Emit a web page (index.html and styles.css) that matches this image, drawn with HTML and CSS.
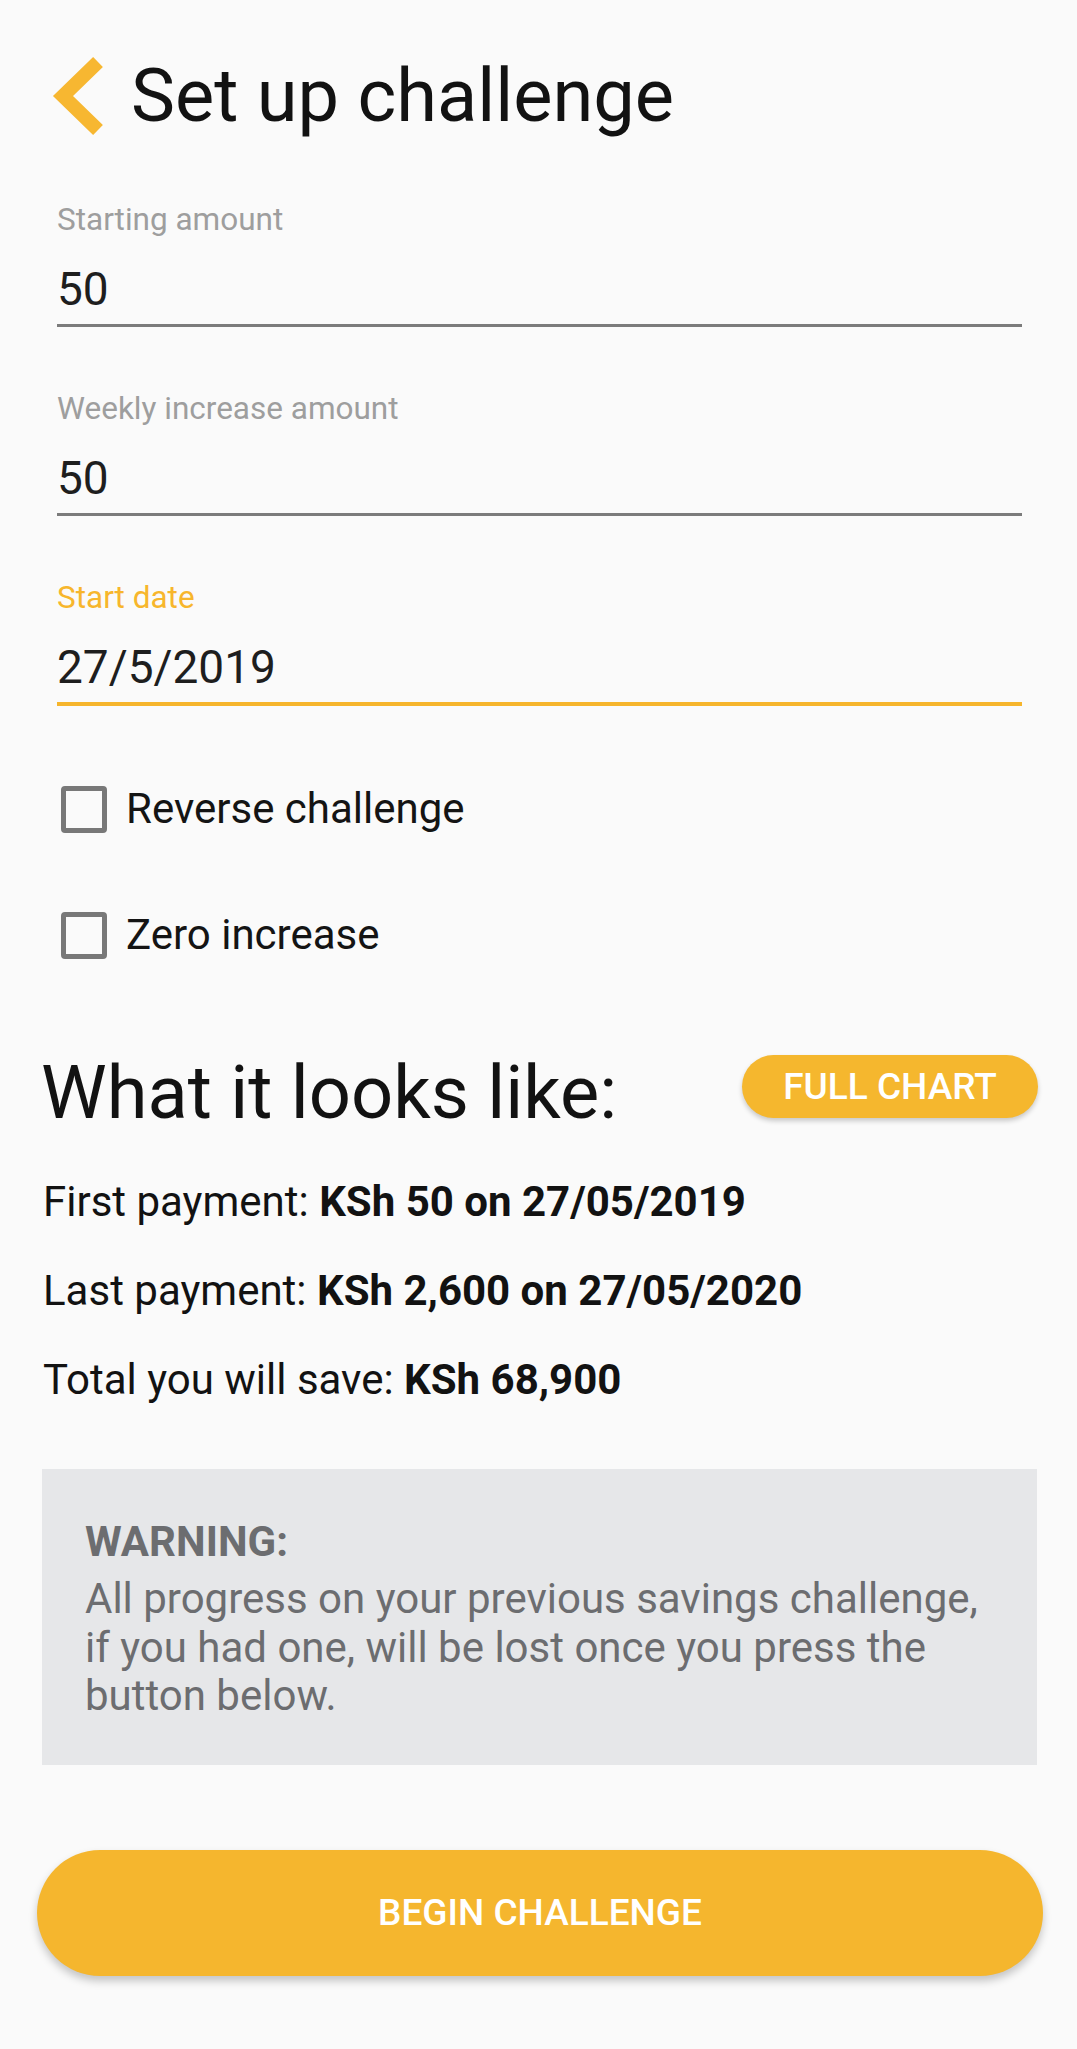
FILE: index.html
```html
<!DOCTYPE html>
<html lang="en">
<head>
<meta charset="utf-8">
<title>Set up challenge</title>
<link rel="stylesheet" href="styles.css">
</head>
<body>
<div class="screen">
  <header class="header">
    <svg class="back" width="60" height="90" viewBox="0 0 60 90" aria-hidden="true">
      <path d="M50 11 L15 45 L50 79" fill="none" stroke="#f7b731" stroke-width="14" stroke-linejoin="miter"/>
    </svg>
    <h1 class="title">Set up challenge</h1>
  </header>

  <section class="form">
    <div class="field field-first">
      <div class="label">Starting amount</div>
      <div class="value">50</div>
      <div class="line"></div>
    </div>
    <div class="field">
      <div class="label">Weekly increase amount</div>
      <div class="value">50</div>
      <div class="line"></div>
    </div>
    <div class="field field-focus">
      <div class="label">Start date</div>
      <div class="value">27/5/2019</div>
      <div class="line"></div>
    </div>

    <div class="check check-first">
      <span class="box"></span>
      <span class="check-text">Reverse challenge</span>
    </div>
    <div class="check">
      <span class="box"></span>
      <span class="check-text">Zero increase</span>
    </div>
  </section>

  <section class="summary">
    <div class="summary-head">
      <h2 class="heading">What it looks like:</h2>
      <button class="chip">FULL CHART</button>
    </div>
    <p class="stat stat-first">First payment: <b>KSh 50 on 27/05/2019</b></p>
    <p class="stat">Last payment: <b>KSh 2,600 on 27/05/2020</b></p>
    <p class="stat">Total you will save: <b>KSh 68,900</b></p>

    <div class="warning">
      <div class="warning-title">WARNING:</div>
      <div class="warning-text">All progress on your previous savings challenge, if you had one, will be lost once you press the button below.</div>
    </div>
  </section>

  <div class="actions">
    <button class="begin">BEGIN CHALLENGE</button>
  </div>
</div>
</body>
</html>
```

FILE: styles.css
```css
* { box-sizing: border-box; }

html, body {
  margin: 0;
  padding: 0;
  background: #fafafa;
}

body {
  font-family: Roboto, "Noto Sans", "Liberation Sans", sans-serif;
  color: #121212;
}

.screen {
  width: 1077px;
  min-height: 2049px;
  display: flex;
  flex-direction: column;
}

/* Header */
.header {
  display: flex;
  align-items: center;
  margin-top: 52px;
  height: 88px;
  padding-left: 48px;
}

.back {
  display: block;
  flex: none;
  margin-right: 23px;
}

.title {
  margin: 0;
  font-size: 74px;
  line-height: 88px;
  font-weight: 400;
  color: #121212;
}

/* Form */
.form {
  padding: 0 55px 0 57px;
  display: flex;
  flex-direction: column;
}

.field { margin-top: 64px; display: flex; flex-direction: column; }
.field-first { margin-top: 62px; }

.label {
  font-size: 31.5px;
  line-height: 36px;
  color: #9e9e9e;
}

.value {
  margin-top: 25px;
  font-size: 46px;
  line-height: 52px;
  color: #1e1e1e;
}

.line {
  margin-top: 9px;
  height: 3px;
  background: #7b7b7b;
}

.field-focus .label { color: #f7b62c; }
.field-focus .line { height: 4px; background: #f6b52c; }

.check {
  display: flex;
  align-items: center;
  height: 48px;
  margin-top: 78px;
  padding-left: 4px;
}
.check-first { margin-top: 79px; }

.box {
  flex: none;
  width: 46px;
  height: 47px;
  border: 5px solid #787878;
  border-radius: 4px;
}

.check-text {
  margin-left: 19px;
  font-size: 42px;
  line-height: 48px;
  color: #141414;
}

/* Summary */
.summary {
  padding: 0 40px 0 42px;
  display: flex;
  flex-direction: column;
}

.summary-head {
  margin-top: 90px;
  display: flex;
  justify-content: space-between;
  align-items: flex-start;
}

.heading {
  margin: 0 0 0 -1px;
  font-size: 74px;
  line-height: 88px;
  font-weight: 400;
  color: #121212;
}

.chip {
  margin-top: 6px;
  margin-right: -1px;
  width: 296px;
  height: 63px;
  border: 0;
  border-radius: 32px;
  background: #f5b72e;
  color: #fff;
  font-family: Roboto, "Noto Sans", sans-serif;
  font-size: 37px;
  font-weight: 500;
  padding: 0;
  box-shadow: 0 3px 5px rgba(0, 0, 0, 0.2);
}

.stat {
  margin: 41px 0 0 1px;
  font-size: 42px;
  line-height: 48px;
  color: #121212;
}
.stat-first { margin-top: 41px; }
.stat b { font-weight: 700; }

.warning {
  margin-top: 65px;
  background: #e6e7e9;
  padding: 49px 43px 44px 43px;
  color: #6c6d70;
}

.warning-title {
  font-size: 42px;
  line-height: 48px;
  font-weight: 700;
}

.warning-text {
  margin-top: 9px;
  font-size: 42px;
  line-height: 48.5px;
}

/* Action */
.actions {
  padding: 85px 34px 0 37px;
}

.begin {
  width: 100%;
  height: 126px;
  border: 0;
  border-radius: 63px;
  background: #f5b62e;
  color: #fff;
  font-family: Roboto, "Noto Sans", sans-serif;
  font-size: 37px;
  font-weight: 500;
  padding: 0;
  box-shadow: 0 5px 8px rgba(0, 0, 0, 0.22);
}
```
